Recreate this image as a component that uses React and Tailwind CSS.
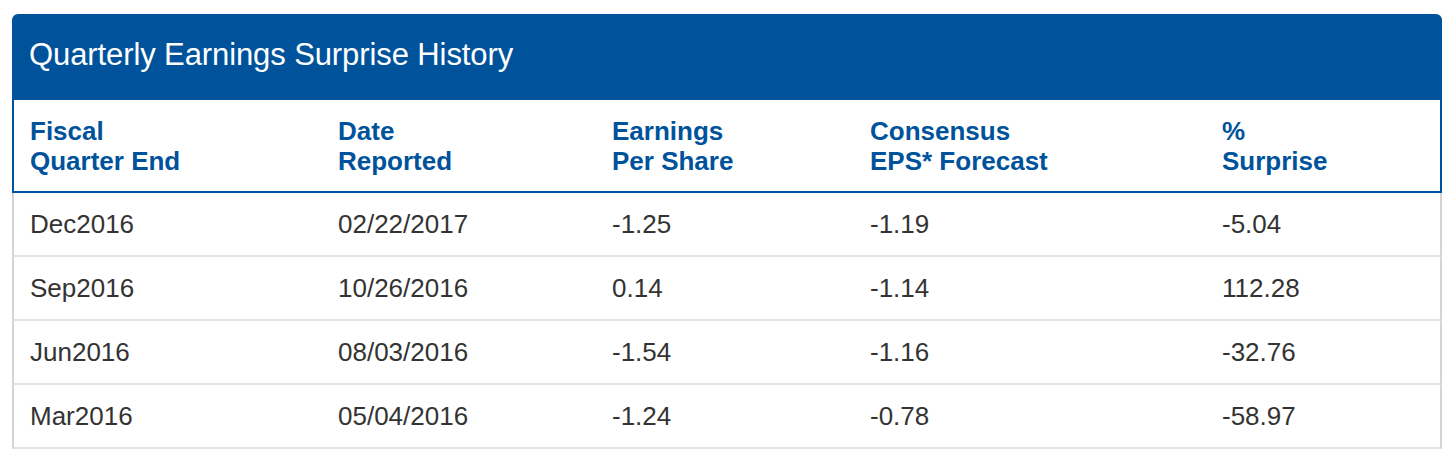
import React from "react";

const rows = [
  ["Dec2016", "02/22/2017", "-1.25", "-1.19", "-5.04"],
  ["Sep2016", "10/26/2016", "0.14", "-1.14", "112.28"],
  ["Jun2016", "08/03/2016", "-1.54", "-1.16", "-32.76"],
  ["Mar2016", "05/04/2016", "-1.24", "-0.78", "-58.97"],
];

const heads = [
  ["Fiscal", "Quarter End"],
  ["Date", "Reported"],
  ["Earnings", "Per Share"],
  ["Consensus", "EPS* Forecast"],
  ["%", "Surprise"],
];

const cols = "grid grid-cols-[308px_274px_258px_352px_1fr]";

export default function App() {
  return (
    <div className="w-[1452px] h-[450px] bg-white pt-[14px] pl-[12px] font-[family-name:'Liberation_Sans',Arial,sans-serif]">
      <div className="w-[1430px]">
        <div className="h-[86px] bg-[#00539b] rounded-t-[6px] flex items-center pl-[17px] pb-[4px]">
          <h2 className="text-white text-[31px] tracking-[-0.1px]">Quarterly Earnings Surprise History</h2>
        </div>
        <div className={`${cols} h-[93px] border-x-2 border-b-2 border-[#00539b] items-center`}>
          {heads.map((h, i) => (
            <div key={i} className="pl-[16px] text-[#00539b] font-bold text-[26px] leading-[30px]">
              <div>{h[0]}</div>
              <div>{h[1]}</div>
            </div>
          ))}
        </div>
        {rows.map((r, i) => (
          <div key={i} className={`${cols} h-[64px] border-x-2 border-l-[#d4d4d4] border-r-[#d4d4d4] border-b-2 border-b-[#e2e2e2] items-center`}>
            {r.map((c, j) => (
              <div key={j} className="pl-[16px] text-[#333] text-[26px]">{c}</div>
            ))}
          </div>
        ))}
      </div>
    </div>
  );
}
